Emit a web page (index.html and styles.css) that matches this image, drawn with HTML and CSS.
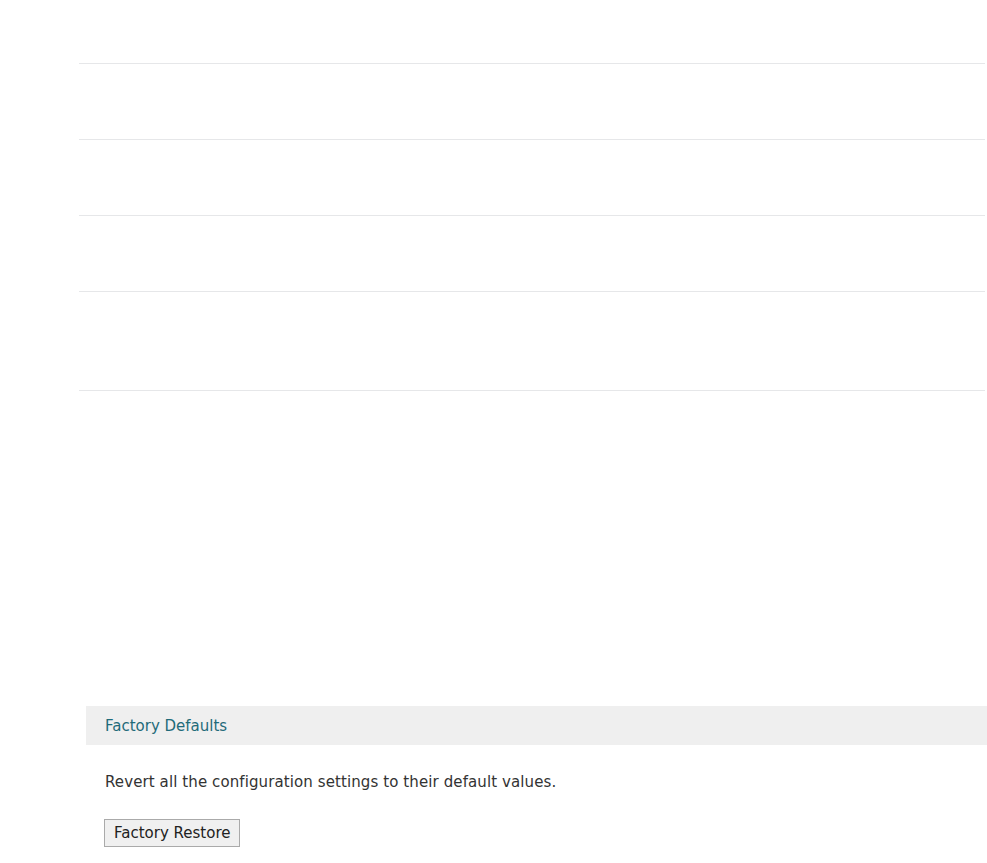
FILE: index.html
```html
<!doctype html>
<html>

<head>
    <title>Backup &amp; Restore</title>
    <link rel="stylesheet" href="styles.css">
</head>

<body>
    <div id="settings">
        <div class="row first"></div>
        <div class="row"></div>
        <div class="row"></div>
        <div class="row"></div>
        <div class="row last"></div>
    </div>

    <div id="factory">
        <div class="panelTitle">Factory Defaults</div>
        <div class="panelBody">
            <p>Revert all the configuration settings to their default values.</p>
            <button class="btn">Factory Restore</button>
        </div>
    </div>
</body>
</html>
```

FILE: styles.css
```css
body {
    margin: 0;
    background: white;
    font-family: "DejaVu Sans", Verdana, sans-serif;
    font-size: 15px;
    color: #333;
}

/* Empty setting rows */
#settings {
    margin-left: 79px;
    margin-right: 2px;
}

#settings .row {
    height: 75px;
    border-bottom: 1px solid #e6e7e9;
}

#settings .row.first {
    height: 63px;
}

#settings .row.last {
    height: 98px;
}

/* Factory defaults panel */
#factory {
    margin-top: 315px;
    margin-left: 86px;
}

.panelTitle {
    background-color: #efefef;
    color: #1f6b7a;
    height: 39px;
    line-height: 40px;
    padding-left: 19px;
}

.panelBody {
    padding: 28px 19px;
}

.panelBody p {
    margin: 0 0 28px 0;
    line-height: 18px;
    letter-spacing: 0.1px;
}

.btn {
    font-family: inherit;
    font-size: 15px;
    line-height: 18px;
    color: #222;
    background-color: #f0f0f0;
    border: 1px solid #aaa;
    padding: 4px 9px;
    margin-left: -1px;
}
```
